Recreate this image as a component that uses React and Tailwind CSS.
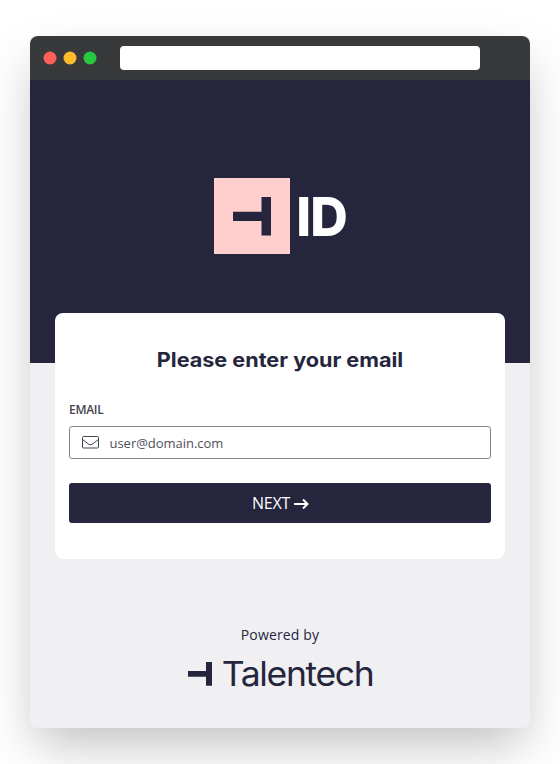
function TalentechMark({ className }) {
  return (
    <svg className={className} viewBox="0 0 38 40" preserveAspectRatio="none" fill="#25253d" aria-hidden="true">
      <path d="M28.5 0H38V39.5H28.5V24.5H0V15H28.5Z" />
    </svg>
  );
}

function TitleBar() {
  return (
    <div className="flex h-11 shrink-0 items-center bg-[#37393a] pl-[13px]">
      <svg className="h-[14px] w-[54px]" viewBox="0 0 54 14" aria-hidden="true">
        <circle cx="7" cy="7" r="6.5" fill="#ff5f57" />
        <circle cx="27" cy="7" r="6.5" fill="#febc2e" />
        <circle cx="47" cy="7" r="6.5" fill="#28c840" />
      </svg>
      <div className="ml-[23px] h-6 w-[360px] rounded bg-white" />
    </div>
  );
}

function LoginCard() {
  return (
    <main className="mx-[25px] -mt-[50px] h-[246px] rounded-lg bg-white px-[14px] pt-[33px]">
      <h1 className="origin-center scale-x-[1.08] text-center font-['Inter',sans-serif] text-[20px] leading-7 font-bold whitespace-nowrap text-[#25253d]">
        Please enter your email
      </h1>
      <label className="mt-[28px] block text-xs leading-4 font-semibold tracking-[-0.3px] text-[#45454f]">EMAIL</label>
      <div className="mt-[8px] flex h-[33px] items-center rounded-[3px] border border-[#85858f] pl-[12px]">
        <svg className="mb-px h-[13px] w-[17px]" viewBox="0 0 17 13" fill="none" stroke="#45454f" aria-hidden="true">
          <rect x="0.5" y="0.5" width="16" height="11.5" rx="1" />
          <path d="M0.5 3.5L6.9 8.3Q8.5 9.4 10.1 8.3L16.5 3.5" />
        </svg>
        <span className="mt-[2px] ml-[10.5px] text-[13px] tracking-[-0.03px] text-[#50505a]">user@domain.com</span>
      </div>
      <button className="mt-6 flex h-10 w-full items-center justify-center gap-[4px] rounded-[3px] bg-[#25253d] pl-px text-base text-white">
        <span className="tracking-[-0.25px]">NEXT</span>
        <svg className="mt-px h-3 w-[15px]" viewBox="0 0 15 12" fill="none" stroke="white" strokeWidth="2" aria-hidden="true">
          <path d="M0 6H13.5M9 1.5L13.5 6L9 10.5" />
        </svg>
      </button>
    </main>
  );
}

export default function App() {
  return (
    <div className="h-[764px] w-[560px] overflow-hidden bg-white px-[30px] pt-9 font-['Open_Sans',sans-serif]">
      <div className="flex h-[692px] flex-col overflow-hidden rounded-lg bg-[#f0f0f3] shadow-[0_22px_50px_-6px_rgba(0,0,0,0.25)]">
        <TitleBar />
        <header className="flex h-[283px] shrink-0 items-start bg-[#25253d] pt-[98px] pl-[184px]">
          <div className="flex size-[76px] items-center justify-center bg-[#ffcfcd]">
            <TalentechMark className="h-[39px] w-[38px]" />
          </div>
          <svg className="h-[76px] w-[64px]" viewBox="0 0 64 76" role="img" aria-label="ID">
            <text x="6.3" y="57.5" fill="white" fontFamily="Inter, sans-serif" fontSize="53.2" fontWeight="800" letterSpacing="-1" textLength="50.5" lengthAdjust="spacingAndGlyphs">ID</text>
          </svg>
        </header>
        <LoginCard />
        <footer className="flex flex-col items-center pt-[65px] text-[#25253d]">
          <p className="text-sm leading-[22px] tracking-[0.15px]">Powered by</p>
          <div className="mt-[4px] flex w-[186px] items-start pl-px">
            <TalentechMark className="mt-[12px] h-6 w-6 shrink-0" />
            <svg className="h-12 w-[170px] shrink-0" viewBox="0 0 170 48" role="img" aria-label="Talentech">
              <text x="9.8" y="35.7" fill="#25253d" fontFamily="Inter, sans-serif" fontSize="33.5" letterSpacing="-1.3" textLength="151.5" lengthAdjust="spacingAndGlyphs">Talentech</text>
            </svg>
          </div>
        </footer>
      </div>
    </div>
  );
}
